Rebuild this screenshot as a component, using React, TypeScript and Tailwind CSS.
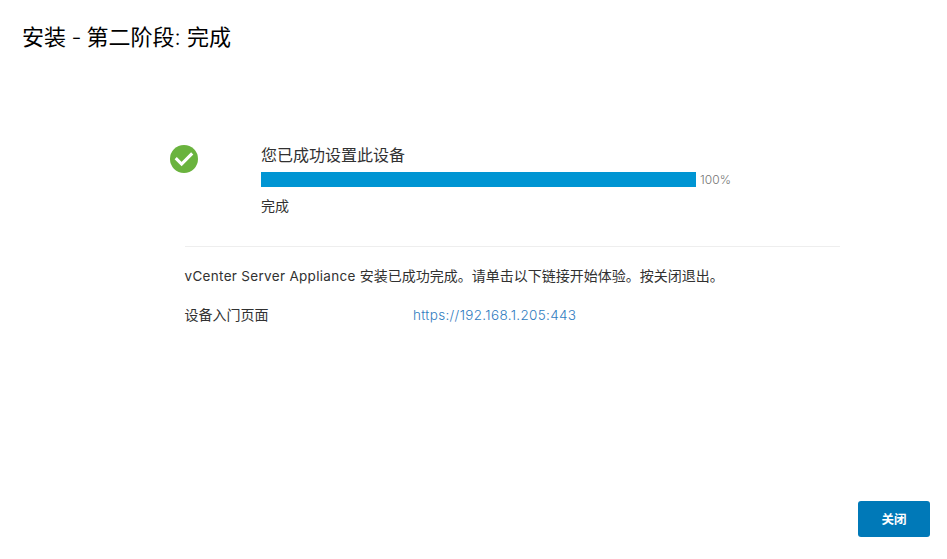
import { useState } from "react";

interface ProgressProps {
    title: string;
    status: string;
    percent: number;
}

function SuccessIcon() {
    return (
        <svg viewBox="0 0 28 28" className="mt-px size-7 shrink-0" aria-hidden="true">
            <circle cx="14" cy="14" r="14" fill="#6ab33e" />
            <path d="M5.7 13.2L11.6 19L22.2 8.4" fill="none" stroke="#fff" strokeWidth="3.1" />
        </svg>
    );
}

function Progress({ title, status, percent }: ProgressProps) {
    return (
        <div className="-mt-px flex flex-col">
            <h2 className="h-6 text-[16px] leading-6 whitespace-nowrap">{title}</h2>
            <div className="mt-[5px] flex h-[15px] items-center">
                <div className="h-[15px] w-[435px] bg-[#eee]">
                    <div className="h-full bg-[#0095d3]" style={{ width: `${percent}%` }} />
                </div>
                <span className="ml-1 text-[12px] leading-[15px] font-light tracking-[0.1px] text-[#757575]">
                    {percent}%
                </span>
            </div>
            <p className="mt-[7px] h-6 text-[14px] leading-6">{status}</p>
        </div>
    );
}

function App() {
    const [open, setOpen] = useState(true);

    if (!open) {
        return null;
    }

    return (
        <div className="flex h-[559px] w-[947px] flex-col bg-white font-['Inter','Noto_Sans_CJK_SC',sans-serif] text-[#313131]">
            <header className="px-[22px] pt-[21px]">
                <h1 className="h-8 text-[22px] leading-8 whitespace-nowrap text-black">
                    安装<span className="font-light tracking-[-0.6px]"> - </span>第二阶段
                    <span className="font-light">: </span>完成
                </h1>
            </header>

            <main className="flex-1 pt-[91px]">
                <div className="flex items-start gap-[63px] pl-[170px]">
                    <SuccessIcon />
                    <Progress title="您已成功设置此设备" status="完成" percent={100} />
                </div>

                <section className="mt-[28px] ml-[185px] w-[655px] border-t border-[#eee] pt-[17px] text-[14px] leading-6">
                    <p className="-ml-[0.5px] whitespace-nowrap">
                        <span className="text-[13.5px] tracking-[0.31px]">vCenter Server Appliance </span>
                        安装已成功完成。请单击以下链接开始体验。按关闭退出。
                    </p>
                    <div className="mt-[15px] -ml-[0.5px] flex">
                        <span className="w-[228.5px]">设备入门页面</span>
                        <a
                            href="https://192.168.1.205:443"
                            className="text-[13.5px] font-light tracking-[0.33px] text-[#2f7cc0]"
                        >
                            https://192.168.1.205:443
                        </a>
                    </div>
                </section>
            </main>

            <footer className="flex justify-end pr-[17px] pb-[22px]">
                <button
                    type="button"
                    onClick={() => setOpen(false)}
                    className="h-9 w-[72px] cursor-pointer rounded-[3px] bg-[#0079b8] pt-0.5 text-[12.5px] font-bold text-white"
                >
                    关闭
                </button>
            </footer>
        </div>
    );
}

export default App;
